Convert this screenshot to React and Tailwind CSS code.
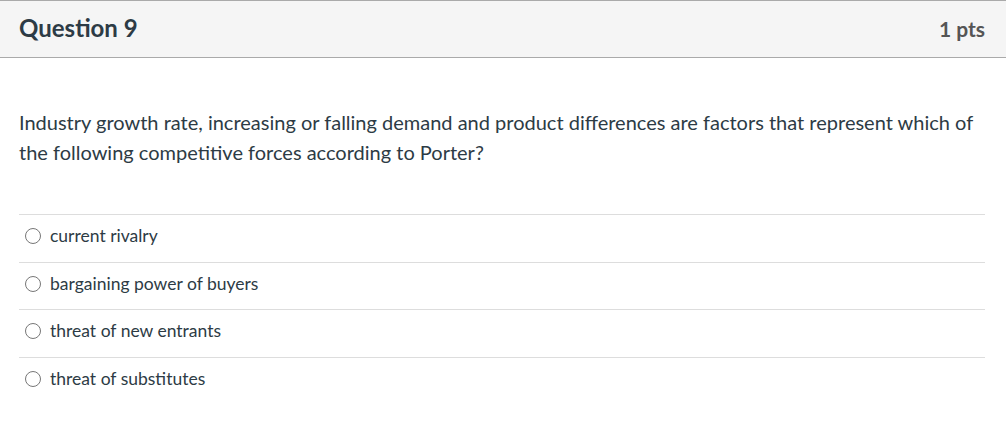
import React from "react";

const options = [
  "current rivalry",
  "bargaining power of buyers",
  "threat of new entrants",
  "threat of substitutes",
];

export default function App() {
  return (
    <div className="w-[1006px] h-[422px] bg-white text-[#2d3b45]" style={{ fontFamily: "Lato, 'Noto Sans', sans-serif" }}>
      <div className="h-[58px] bg-[#f5f5f5] border-t border-b border-[#aaaaaa] flex items-center justify-between px-[19px]">
        <div className="text-[24px] font-bold text-[#2d3b45] leading-none pb-[2px]">Question 9</div>
        <div className="text-[21px] font-bold text-[#555555] leading-none pb-[2px] pr-[2px]">1 pts</div>
      </div>
      <div className="px-[19px] pt-[49px]">
        <p className="text-[20px] leading-[30px] text-[#2d3b45]">
          Industry growth rate, increasing or falling demand and product differences are factors that represent which of the following competitive forces according to Porter?
        </p>
        <div className="mt-[47px] w-[966px]">
          {options.map((o) => (
            <div key={o} className="border-t border-[#dddddd] h-[47.5px] flex items-center pb-[4px]">
              <span className="ml-[6px] w-[16px] h-[16px] rounded-full border border-[#777777] bg-white shrink-0"></span>
              <span className="ml-[9px] text-[17.5px] text-[#2d3b45]">{o}</span>
            </div>
          ))}
        </div>
      </div>
    </div>
  );
}
